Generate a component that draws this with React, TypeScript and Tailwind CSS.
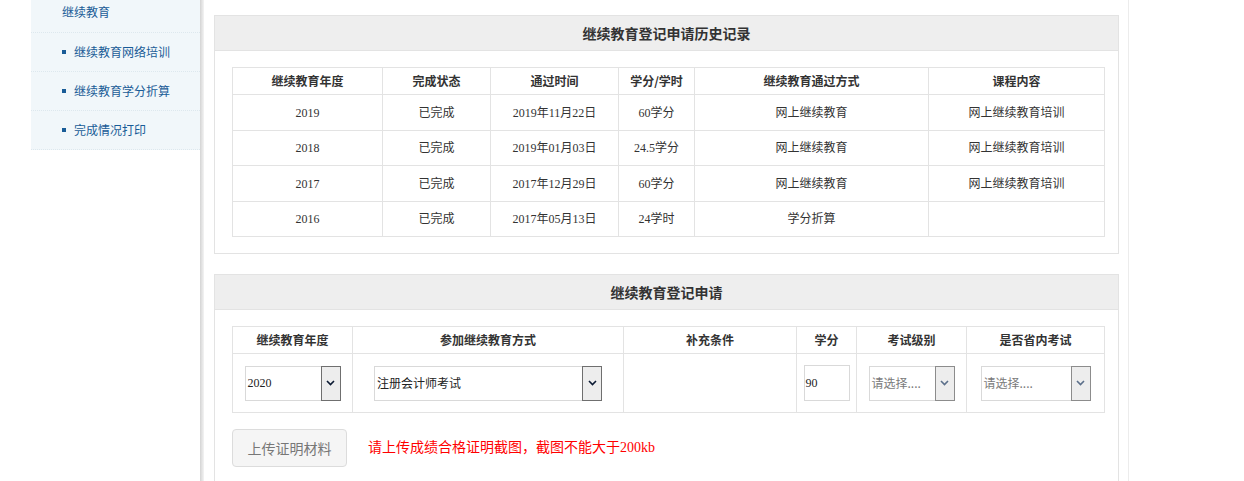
import React from "react";

const sans = { fontFamily: '"Noto Sans CJK SC", "Noto Sans", sans-serif' };
const mixed = { fontFamily: '"Liberation Serif", "Noto Sans CJK SC", serif' };

function Chevron({ light }: { light?: boolean }) {
  return (
    <svg width="9" height="6" viewBox="0 0 9 6" className="block">
      <path d="M1 1 L4.5 4.5 L8 1" fill="none" stroke={light ? "#5b6f8a" : "#0b1a33"} strokeWidth="1.6" />
    </svg>
  );
}

function Select({ width, text, placeholder, serif }: { width: string; text: string; placeholder?: boolean; serif?: boolean }) {
  return (
    <div className={`relative mx-auto h-[35px] ${width} border border-[#d9d9d9] bg-white flex items-center`}>
      <span
        className={`pl-[2px] text-[12px] leading-[16px] ${placeholder ? "text-[#7a7a7a]" : "text-[#222]"}`}
        style={serif ? mixed : sans}
      >
        {text}
      </span>
      <div
        className={`absolute right-[-1px] top-[-1px] bottom-[-1px] w-[20px] border ${placeholder ? "border-[#8c8c8c]" : "border-[#6f6f6f]"} bg-[#ededed] flex items-center justify-center`}
      >
        <Chevron light={placeholder} />
      </div>
    </div>
  );
}

const hist = [
  ["2019", "已完成", "2019年11月22日", "60学分", "网上继续教育", "网上继续教育培训", 36],
  ["2018", "已完成", "2019年01月03日", "24.5学分", "网上继续教育", "网上继续教育培训", 35],
  ["2017", "已完成", "2017年12月29日", "60学分", "网上继续教育", "网上继续教育培训", 36],
  ["2016", "已完成", "2017年05月13日", "24学时", "学分折算", "", 35],
] as const;

export default function App() {
  return (
    <div className="flex w-[1244px] h-[481px] overflow-hidden bg-white" style={sans}>
      <div className="w-[31px] shrink-0" />
      <aside className="w-[169px] shrink-0">
        <div className="bg-[#f1f7fa] text-[12px] text-[#195c97]">
          <div className="h-[32px] pt-[4px] pl-[31px] leading-[16px]">继续教育</div>
          {["继续教育网络培训", "继续教育学分折算", "完成情况打印"].map((t) => (
            <div key={t} className="h-[39px] border-t border-dotted border-[#dde8ee] flex items-center pl-[31px]">
              <span className="w-[4px] h-[4px] bg-[#195c97] mr-[8px]" />
              <span className="leading-[16px]">{t}</span>
            </div>
          ))}
          <div className="border-t border-dotted border-[#dde8ee]" />
        </div>
      </aside>
      <div className="w-[4px] shrink-0 bg-gradient-to-r from-[#d4d4d4] to-[#f4f4f4]" />
      <main className="w-[925px] shrink-0 border-r border-[#ececec] pl-[10px] pr-[9px] pt-[15px] flex flex-col gap-[20px]">
        <section className="border border-[#e3e3e3] pb-[16px]">
          <div className="h-[35px] bg-[#eeeeee] border-b border-[#e3e3e3] flex items-center justify-center text-[14px] font-bold text-[#333]">
            继续教育登记申请历史记录
          </div>
          <table className="ml-[17px] mt-[16px] w-[872px] table-fixed border-collapse text-[12px] text-[#333]">
            <colgroup>
              <col className="w-[150px]" />
              <col className="w-[108px]" />
              <col className="w-[128px]" />
              <col className="w-[76px]" />
              <col className="w-[234px]" />
              <col className="w-[176px]" />
            </colgroup>
            <thead>
              <tr className="h-[27px]">
                {["继续教育年度", "完成状态", "通过时间", "学分/学时", "继续教育通过方式", "课程内容"].map((h) => (
                  <th key={h} className="border border-[#e3e3e3] font-bold text-center leading-[16px] p-0">
                    {h}
                  </th>
                ))}
              </tr>
            </thead>
            <tbody style={mixed}>
              {hist.map((r) => (
                <tr key={r[0]} style={{ height: r[6] }}>
                  {r.slice(0, 6).map((c, i) => (
                    <td key={i} className="border border-[#e3e3e3] text-center leading-[16px] p-0">
                      {c}
                    </td>
                  ))}
                </tr>
              ))}
            </tbody>
          </table>
        </section>

        <section className="border border-[#e3e3e3] border-b-0 flex-1">
          <div className="h-[35px] bg-[#eeeeee] border-b border-[#e3e3e3] flex items-center justify-center text-[14px] font-bold text-[#333]">
            继续教育登记申请
          </div>
          <table className="ml-[17px] mt-[16px] w-[872px] table-fixed border-collapse text-[12px] text-[#333]">
            <colgroup>
              <col className="w-[120px]" />
              <col className="w-[271px]" />
              <col className="w-[173px]" />
              <col className="w-[60px]" />
              <col className="w-[110px]" />
              <col className="w-[138px]" />
            </colgroup>
            <thead>
              <tr className="h-[27px]">
                {["继续教育年度", "参加继续教育方式", "补充条件", "学分", "考试级别", "是否省内考试"].map((h) => (
                  <th key={h} className="border border-[#e3e3e3] font-bold text-center leading-[16px] p-0">
                    {h}
                  </th>
                ))}
              </tr>
            </thead>
            <tbody>
              <tr className="h-[59px]">
                <td className="border border-[#e3e3e3] p-0">
                  <Select width="w-[96px]" text="2020" serif />
                </td>
                <td className="border border-[#e3e3e3] p-0">
                  <Select width="w-[228px]" text="注册会计师考试" />
                </td>
                <td className="border border-[#e3e3e3] p-0" />
                <td className="border border-[#e3e3e3] p-0">
                  <div className="mx-auto w-[46px] h-[36px] border border-[#d9d9d9] bg-white flex items-center pl-[1px] text-[12px] text-[#222]" style={mixed}>
                    90
                  </div>
                </td>
                <td className="border border-[#e3e3e3] p-0">
                  <Select width="w-[86px]" text="请选择...." placeholder />
                </td>
                <td className="border border-[#e3e3e3] p-0">
                  <Select width="w-[110px]" text="请选择...." placeholder />
                </td>
              </tr>
            </tbody>
          </table>
          <div className="ml-[17px] mt-[16px] flex items-center">
            <button className="w-[115px] h-[38px] border border-[#dcdcdc] bg-[#f5f5f5] rounded-[4px] text-[14px] text-[#777] leading-[18px]">
              上传证明材料
            </button>
            <span className="ml-[21px] text-[14px] text-[#ff0000] leading-[18px]" style={mixed}>
              请上传成绩合格证明截图，截图不能大于200kb
            </span>
          </div>
        </section>
      </main>
    </div>
  );
}
